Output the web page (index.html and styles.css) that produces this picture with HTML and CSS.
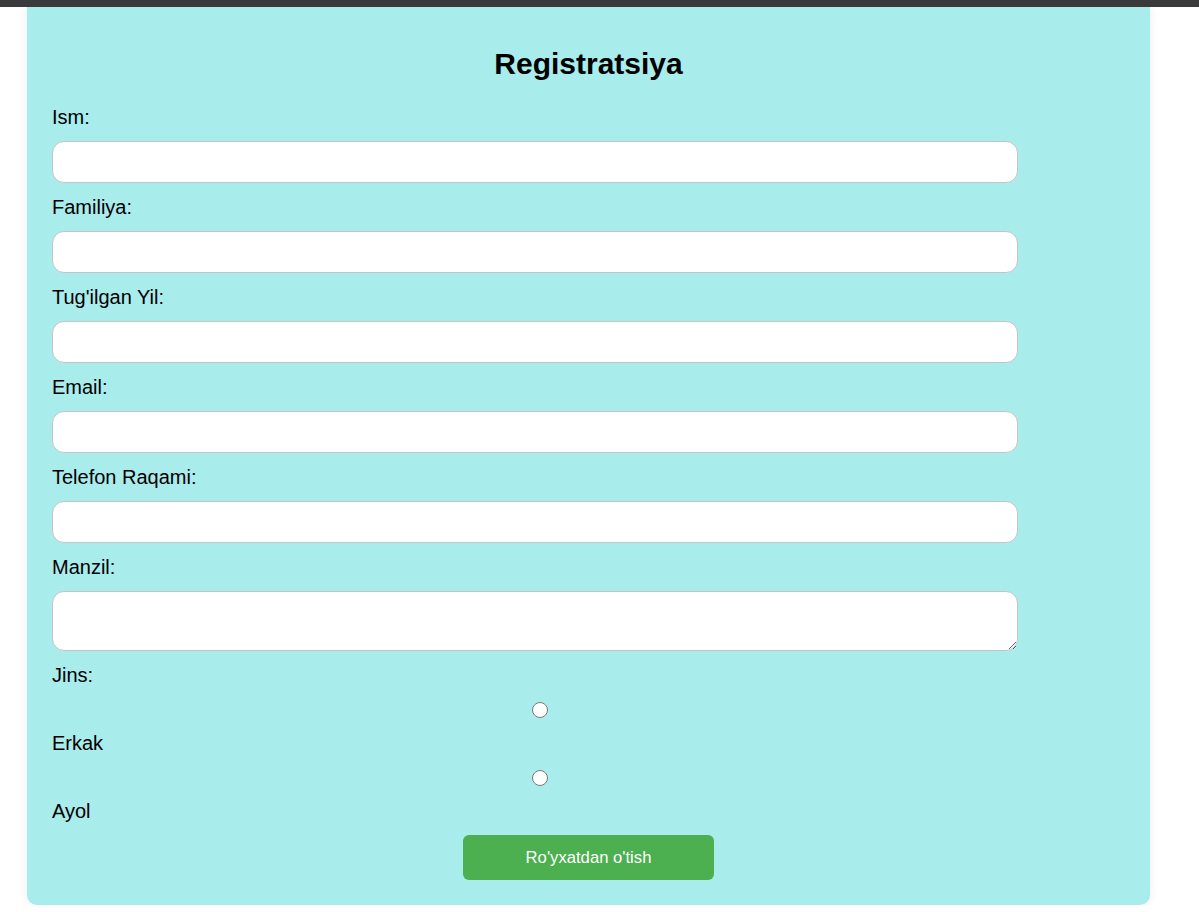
FILE: index.html
```html
<!DOCTYPE html>
<html lang="uz">
<head>
<meta charset="utf-8">
<title>Registratsiya</title>
<link rel="stylesheet" href="styles.css">
</head>
<body>
<div class="topbar"></div>
<div class="card">
  <h2 class="title">Registratsiya</h2>
  <form class="form">
    <label class="lbl" for="ism">Ism:</label>
    <input class="field" type="text" id="ism">
    <label class="lbl" for="fam">Familiya:</label>
    <input class="field" type="text" id="fam">
    <label class="lbl" for="yil">Tug'ilgan Yil:</label>
    <input class="field" type="text" id="yil">
    <label class="lbl" for="email">Email:</label>
    <input class="field" type="email" id="email">
    <label class="lbl" for="tel">Telefon Raqami:</label>
    <input class="field" type="text" id="tel">
    <label class="lbl" for="manzil">Manzil:</label>
    <textarea class="field area" id="manzil"></textarea>
    <label class="lbl">Jins:</label>
    <input class="radio" type="radio" name="jins" id="erkak">
    <label class="lbl" for="erkak">Erkak</label>
    <input class="radio" type="radio" name="jins" id="ayol">
    <label class="lbl" for="ayol">Ayol</label>
    <button class="btn" type="button">Ro'yxatdan o'tish</button>
  </form>
</div>
</body>
</html>
```
FILE: styles.css
```css
html, body {
  margin: 0;
  padding: 0;
  background: #ffffff;
  font-family: "Liberation Sans", Arial, sans-serif;
  color: #000;
}
.topbar {
  height: 7px;
  background: #3a3a3a;
  position: relative;
  z-index: 2;
}
.card {
  width: 1123px;
  box-sizing: border-box;
  margin-left: 27px;
  padding: 14px 25px 25px 25px;
  background: #a8ecec;
  border-radius: 0 0 10px 10px;
  box-shadow: 0 0 10px rgba(0, 0, 0, 0.08);
}
.title {
  margin: 25px 0 25px 0;
  font-size: 30px;
  font-weight: bold;
  text-align: center;
  line-height: 35px;
}
.form {
  display: block;
  margin: 0;
}
.lbl {
  display: block;
  font-size: 20px;
  line-height: 23px;
  margin-bottom: 12px;
}
.field {
  display: block;
  width: 90%;
  height: 42px;
  box-sizing: border-box;
  margin: 0 0 13px 0;
  padding: 10px 12px;
  border: 1px solid #c4c4c4;
  border-radius: 12px;
  background: #ffffff;
  font-family: "Liberation Sans", Arial, sans-serif;
  font-size: 16px;
}
.area {
  height: 60px;
  margin-bottom: 13px;
}
.radio {
  display: block;
  width: 90%;
  height: 16px;
  margin: 15px 0 14px 5px;
}
.btn {
  display: block;
  width: 251px;
  height: 45px;
  margin: 0 auto;
  border: none;
  border-radius: 6px;
  background: #4caf50;
  color: #ffffff;
  font-family: "Liberation Sans", Arial, sans-serif;
  font-size: 16.67px;
}
```
